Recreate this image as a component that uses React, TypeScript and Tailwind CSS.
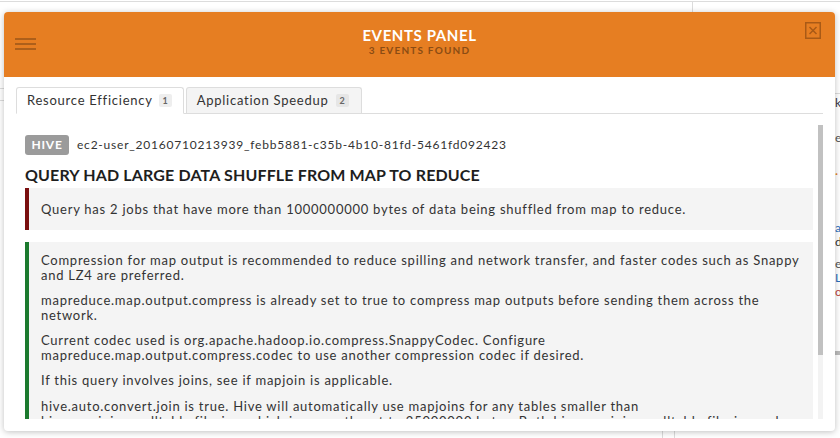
import React from "react";

const P = ({ children, last }: { children: React.ReactNode; last?: boolean }) => (
  <p className={last ? "" : "mb-[10px]"}>{children}</p>
);

export default function App() {
  return (
    <div className="relative w-[840px] h-[438px] overflow-hidden bg-white font-['Lato','Noto_Sans',sans-serif] text-[#333]">
      {/* background page */}
      <div className="flex flex-col h-full">
        <div className="mt-px h-[12px] border-t border-[#dcdcdc] flex">
          <div className="w-[693px] border-r border-[#dcdcdc]" />
        </div>
        <div className="flex-1 flex">
          <div className="w-[4px] pt-[75px] flex flex-col gap-[11px]">
            <div className="h-px bg-[#dcdcdc]" />
            <div className="h-px bg-[#dcdcdc]" />
          </div>
          <div className="flex-1" />
          <div className="w-[5px] pt-[80px] flex flex-col text-[12px] leading-[14px] overflow-hidden">
            <div className="h-[20px] border-t border-[#dcdcdc] pt-[2px] text-[#334]">k</div>
            <div className="h-[50px] pt-[18px] text-[#555]">e</div>
            <div className="h-[58px] pt-[4px] text-[#e67e22]">·</div>
            <div className="h-[14px] text-[#2a6ebb]">a</div>
            <div className="h-[22px] text-[#333]">d</div>
            <div className="h-[14px] text-[#555]">e</div>
            <div className="h-[14px] text-[#2a6ebb]">L</div>
            <div className="h-[14px] text-[#b44]">o</div>
            <div className="mt-[52px] h-[4px] bg-[#bbb]" />
          </div>
        </div>
        <div className="h-[7px] flex">
          <div className="w-[663px] border-r border-[#dcdcdc]" />
          <div className="w-[12px] border-r border-[#dcdcdc]" />
        </div>
      </div>

      {/* modal */}
      <div className="absolute left-[4px] top-[12px] w-[831px] h-[419px] bg-white rounded-[4px] shadow-[0_1px_6px_rgba(0,0,0,0.25)] flex flex-col overflow-hidden">
        {/* header */}
        <div className="h-[65px] bg-[#e67e22] flex items-start shrink-0">
          <div className="pl-[11px] pt-[26px] w-[60px]">
            <div className="flex flex-col gap-[3px]">
              <div className="h-[2px] w-[21px] bg-[#ad5f1a]" />
              <div className="h-[2px] w-[21px] bg-[#ad5f1a]" />
              <div className="h-[2px] w-[21px] bg-[#ad5f1a]" />
            </div>
          </div>
          <div className="flex-1 text-center pt-[14px]">
            <div className="text-white font-bold text-[15px] leading-[18px] tracking-[0.6px]">EVENTS PANEL</div>
            <div className="text-[#8a4c14] font-bold text-[10px] leading-[12px] tracking-[1.2px]">3 EVENTS FOUND</div>
          </div>
          <div className="w-[60px] flex justify-end pr-[14px] pt-[10px]">
            <svg width="16" height="17" viewBox="0 0 16 17" fill="none" stroke="#a95a16" strokeWidth="1.5">
              <rect x="0.75" y="0.75" width="14.5" height="15.5" />
              <path d="M4.5 5 L11.5 12 M11.5 5 L4.5 12" />
            </svg>
          </div>
        </div>

        {/* body */}
        <div className="flex-1 flex flex-col px-[12px] pt-[10px] pb-[12px] min-h-0">
          <div className="flex items-end gap-[2px] border-b border-[#dddddd] shrink-0">
            <div className="h-[27px] -mb-px pl-[10px] pr-[11px] flex items-center gap-[6px] bg-white border border-[#dddddd] border-b-white rounded-t-[3px] text-[13px] tracking-[0.75px] text-[#333]">
              <span>Resource Efficiency</span>
              <span className="h-[13px] min-w-[13px] px-[3px] flex items-center justify-center bg-[#eeeeee] rounded-[2px] text-[9px] font-bold tracking-normal text-[#666]">1</span>
            </div>
            <div className="h-[26px] pl-[10px] pr-[12px] flex items-center gap-[7px] bg-[#f4f4f4] border border-b-0 border-[#dddddd] rounded-t-[3px] text-[13px] tracking-[0.75px] text-[#333]">
              <span>Application Speedup</span>
              <span className="h-[13px] min-w-[13px] px-[3px] flex items-center justify-center bg-[#e6e6e6] rounded-[2px] text-[9px] font-bold tracking-normal text-[#666]">2</span>
            </div>
          </div>

          <div className="flex-1 flex min-h-0">
            <div className="flex-1 overflow-hidden pl-[9px] pr-[5px] pt-[21px]">
              <div className="flex items-center gap-[8px]">
                <span className="h-[20px] w-[44px] flex items-center justify-center bg-[#9b9b9b] rounded-[3px] text-white font-bold text-[12px] tracking-[0.8px]">HIVE</span>
                <span className="text-[12px] tracking-[0.78px] text-[#333]">ec2-user_20160710213939_febb5881-c35b-4b10-81fd-5461fd092423</span>
              </div>
              <div className="mt-[9px] text-[16px] leading-[22px] font-bold text-[#1e1e1e] tracking-[0.15px]">
                QUERY HAD LARGE DATA SHUFFLE FROM MAP TO REDUCE
              </div>
              <div className="mt-[2px] bg-[#f4f4f4] border-l-[4px] border-[#7a0f0f] pl-[12px] pr-[10px] py-[13px] text-[13px] leading-[16px] tracking-[0.75px] text-[#333]">
                Query has 2 jobs that have more than 1000000000 bytes of data being shuffled from map to reduce.
              </div>
              <div className="mt-[12px] bg-[#f4f4f4] border-l-[4px] border-[#1b7a2e] pl-[12px] pr-[6px] pt-[11px] pb-[12px] text-[13px] leading-[15px] tracking-[0.75px] text-[#333]">
                <P>
                  Compression for map output is recommended to reduce spilling and network transfer, and faster codes such as Snappy
                  <br />
                  and LZ4 are preferred.
                </P>
                <P>
                  mapreduce.map.output.compress is already set to true to compress map outputs before sending them across the
                  <br />
                  network.
                </P>
                <P>
                  Current codec used is org.apache.hadoop.io.compress.SnappyCodec. Configure
                  <br />
                  mapreduce.map.output.compress.codec to use another compression codec if desired.
                </P>
                <P>If this query involves joins, see if mapjoin is applicable.</P>
                <div className="pt-px">
                  <P last>
                    hive.auto.convert.join is true. Hive will automatically use mapjoins for any tables smaller than
                    <br />
                    hive.mapjoin.smalltable.filesize, which is currently set to 25000000 bytes. Both hive.mapjoin.smalltable.filesize and hive.auto.convert.join can be changed if desired.
                  </P>
                </div>
              </div>
            </div>
            <div className="w-[5px] pt-[11px] flex flex-col">
              <div className="h-[230px] bg-[#c1c1c1]" />
              <div className="flex-1 bg-[#f3f3f3]" />
            </div>
          </div>
        </div>
      </div>
    </div>
  );
}
